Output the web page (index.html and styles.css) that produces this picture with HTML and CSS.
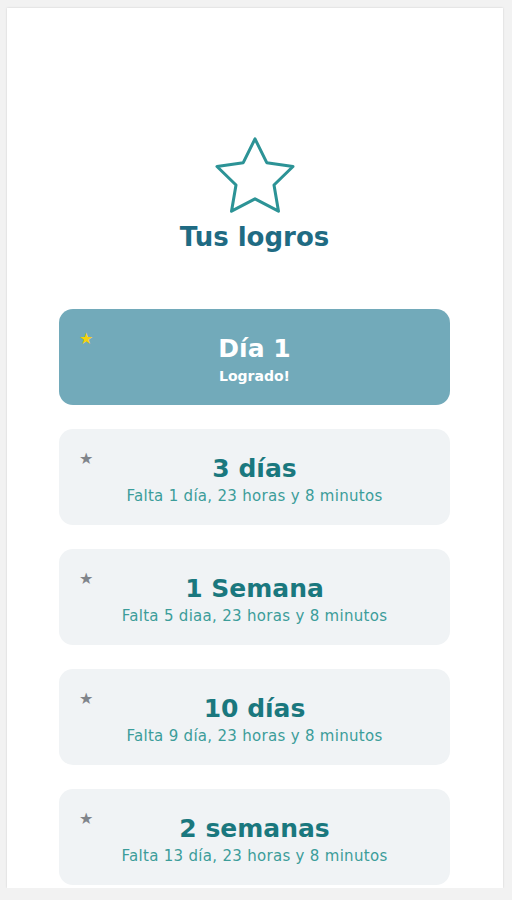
FILE: index.html
```html
<!DOCTYPE html>
<html lang="es">
  <head>
    <meta charset="UTF-8" />
    <meta name="viewport" content="width=device-width, initial-scale=1.0" />
    <title>Tus logros</title>
    <link rel="stylesheet" href="styles.css">
  </head>
  <body>
    <div class="screen">
      <div class="header">
        <svg class="bigStar" width="82" height="76" viewBox="1.5 1.5 21 20">
          <path d="M12 2l3.09 6.26L22 9.27l-5 4.87 1.18 6.88L12 17.77l-6.18 3.25L7 14.14 2 9.27l6.91-1.01L12 2z" />
        </svg>
        <h1>Tus logros</h1>
      </div>
      <div class="list">
        <div class="card done">
          <span class="mark">★</span>
          <div class="cardTitle">Día 1</div>
          <div class="cardSub">Logrado!</div>
        </div>
        <div class="card">
          <span class="mark">★</span>
          <div class="cardTitle">3 días</div>
          <div class="cardSub">Falta 1 día, 23 horas y 8 minutos</div>
        </div>
        <div class="card">
          <span class="mark">★</span>
          <div class="cardTitle">1 Semana</div>
          <div class="cardSub">Falta 5 diaa, 23 horas y 8 minutos</div>
        </div>
        <div class="card">
          <span class="mark">★</span>
          <div class="cardTitle">10 días</div>
          <div class="cardSub">Falta 9 día, 23 horas y 8 minutos</div>
        </div>
        <div class="card">
          <span class="mark">★</span>
          <div class="cardTitle">2 semanas</div>
          <div class="cardSub">Falta 13 día, 23 horas y 8 minutos</div>
        </div>
      </div>
    </div>
  </body>
</html>
```

FILE: styles.css
```css
* {
  box-sizing: border-box;
}
html {
  font-family: "DejaVu Sans", sans-serif;
}
body {
  margin: 0;
  background: #f2f2f2;
}
.screen {
  margin: 8px 9px 0 7px;
  height: 880px;
  background: #fff;
  box-shadow: 0 0 2px rgba(0, 0, 0, 0.15);
  padding: 129px 53px 0 52px;
}
.header {
  display: flex;
  flex-direction: column;
  align-items: center;
}
.bigStar {
  fill: none;
  stroke: #2c9396;
  stroke-width: 0.8;
  stroke-linejoin: round;
}
h1 {
  margin: 8px 0 0;
  font-size: 26px;
  line-height: 32px;
  color: #1f6b83;
}
.list {
  margin-top: 56px;
  display: flex;
  flex-direction: column;
  gap: 24px;
}
.card {
  position: relative;
  height: 96px;
  padding-top: 25px;
  border-radius: 14px;
  background: #f0f3f5;
  text-align: center;
}
.mark {
  position: absolute;
  left: 20px;
  top: 21px;
  font-size: 16px;
  line-height: 18px;
  color: #80858b;
}
.cardTitle {
  font-size: 25px;
  line-height: 30px;
  font-weight: bold;
  color: #1a787e;
}
.cardSub {
  margin-top: 2px;
  font-size: 15px;
  line-height: 20px;
  letter-spacing: 0.3px;
  color: #3c9d9a;
}
.done {
  background: #72aaba;
}
.done .mark {
  color: #f5d20a;
}
.done .cardTitle,
.done .cardSub {
  color: #fff;
}
.done .cardSub {
  font-size: 14px;
  letter-spacing: 0;
  font-weight: bold;
}
```
